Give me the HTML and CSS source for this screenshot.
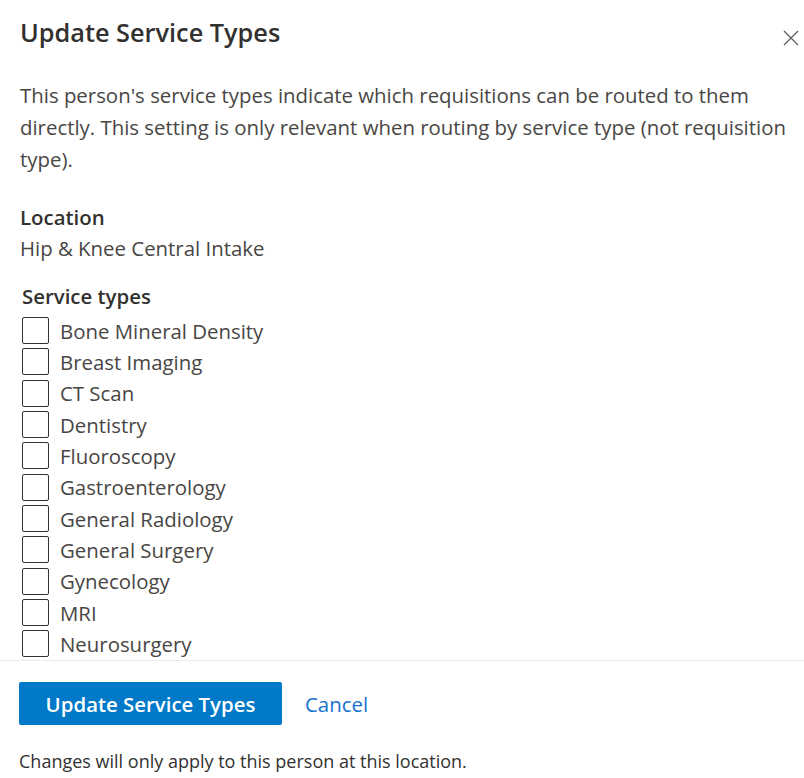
FILE: index.html
```html
<!DOCTYPE html>
<html lang="en">
<head>
    <meta charset="UTF-8">
    <meta name="viewport" content="width=device-width, initial-scale=1.0">
    <title>Update Service Types</title>
    <link rel="stylesheet" href="styles.css">
</head>
<body>
    <div class="panel">
        <header class="panel-header">
            <h1>Update Service Types</h1>
            <button class="close-btn" aria-label="Close">
                <svg width="16" height="16" viewBox="0 0 16 16">
                    <path d="M1 1 L15 15 M15 1 L1 15" stroke="#605e5c" stroke-width="1.3" fill="none"/>
                </svg>
            </button>
        </header>

        <div class="panel-content">
            <p class="intro">This person's service types indicate which requisitions can be routed to them directly. This setting is only relevant when routing by service type (not requisition type).</p>

            <div class="field">
                <div class="field-label">Location</div>
                <div class="field-value">Hip &amp; Knee Central Intake</div>
            </div>

            <div class="service-types">
                <div class="group-label">Service types</div>
                <label class="check-row"><span class="box"></span>Bone Mineral Density</label>
                <label class="check-row"><span class="box"></span>Breast Imaging</label>
                <label class="check-row"><span class="box"></span>CT Scan</label>
                <label class="check-row"><span class="box"></span>Dentistry</label>
                <label class="check-row"><span class="box"></span>Fluoroscopy</label>
                <label class="check-row"><span class="box"></span>Gastroenterology</label>
                <label class="check-row"><span class="box"></span>General Radiology</label>
                <label class="check-row"><span class="box"></span>General Surgery</label>
                <label class="check-row"><span class="box"></span>Gynecology</label>
                <label class="check-row"><span class="box"></span>MRI</label>
                <label class="check-row"><span class="box"></span>Neurosurgery</label>
            </div>
        </div>

        <footer class="panel-footer">
            <div class="actions">
                <button class="primary-btn">Update Service Types</button>
                <a href="#" class="link-btn">Cancel</a>
            </div>
            <p class="note">Changes will only apply to this person at this location.</p>
        </footer>
    </div>
</body>
</html>
```

FILE: styles.css
```css
:root {
    --text-color: #323130;
    --body-color: #484644;
    --primary-color: #0079c8;
    --link-color: #1672cf;
    --border-color: #edebe9;
}

* {
    box-sizing: border-box;
}

body {
    font-family: 'Open Sans', 'Noto Sans', sans-serif;
    margin: 0;
    padding: 0;
    background-color: white;
    color: var(--text-color);
}

.panel {
    width: 804px;
    height: 778px;
    display: flex;
    flex-direction: column;
    overflow: hidden;
}

.panel-header {
    display: flex;
    justify-content: space-between;
    align-items: flex-start;
    padding: 14px 5px 0 20px;
}

h1 {
    margin: 0;
    font-size: 25.3px;
    line-height: 36px;
    font-weight: 600;
    color: var(--text-color);
}

.close-btn {
    background: none;
    border: none;
    padding: 0;
    margin-top: 16px;
    width: 16px;
    height: 16px;
    cursor: pointer;
}

.close-btn svg {
    display: block;
}

.panel-content {
    flex: 1;
    min-height: 0;
    overflow: hidden;
    padding: 0 10px 0 20px;
}

.intro {
    margin: 29px 0 0 0;
    font-size: 20.4px;
    line-height: 32px;
    color: var(--body-color);
}

.field {
    margin-top: 27px;
    font-size: 20.4px;
    line-height: 31px;
}

.field-label {
    font-weight: 600;
    color: var(--text-color);
}

.field-value {
    color: var(--body-color);
}

.service-types {
    margin-top: 16px;
    padding-left: 2px;
}

.group-label {
    font-size: 20.4px;
    line-height: 32px;
    font-weight: 600;
    color: var(--text-color);
    margin-bottom: 3px;
}

.check-row {
    display: flex;
    align-items: center;
    gap: 11px;
    height: 31.33px;
    font-size: 20.4px;
    color: var(--body-color);
    cursor: pointer;
}

.box {
    width: 27px;
    height: 27px;
    border: 1px solid var(--text-color);
    border-radius: 2px;
    flex-shrink: 0;
}

.panel-footer {
    flex-shrink: 0;
    border-top: 1px solid var(--border-color);
    padding: 21px 19px 0 19px;
    height: 118px;
}

.actions {
    display: flex;
    align-items: center;
    gap: 23px;
}

.primary-btn {
    background-color: var(--primary-color);
    color: white;
    border: none;
    border-radius: 2px;
    width: 263px;
    height: 43px;
    padding: 0;
    font-family: inherit;
    font-size: 20.4px;
    font-weight: 600;
    cursor: pointer;
}

.link-btn {
    color: var(--link-color);
    font-size: 20.4px;
    text-decoration: none;
}

.note {
    margin: 24px 0 0 0;
    font-size: 18px;
    line-height: 24px;
    color: var(--text-color);
}
```
